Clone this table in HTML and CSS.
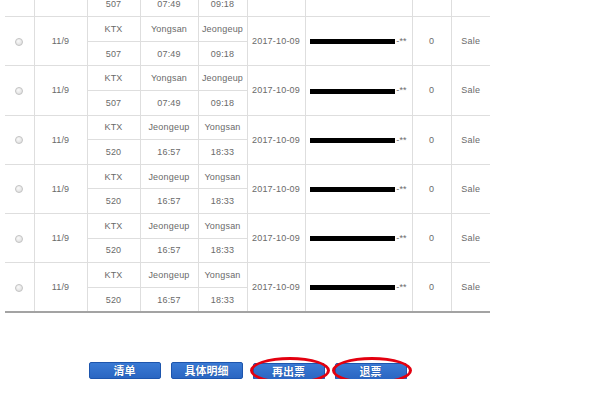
FILE: index.html
```html
<!DOCTYPE html>
<html lang="zh">
<head>
    <meta charset="UTF-8">
    <meta name="viewport" content="width=device-width, initial-scale=1.0">
    <title>Ticket list</title>
    <link rel="stylesheet" href="styles.css">
</head>
<body>
    <div class="page">
        <div class="list">
            <table class="tickets">
                <colgroup>
                    <col class="c-sel"><col class="c-day"><col class="c-train"><col class="c-from"><col class="c-to">
                    <col class="c-date"><col class="c-no"><col class="c-cnt"><col class="c-state">
                </colgroup>
                <tbody>
                    <tr>
                        <td rowspan="2"><input type="radio" name="pick"></td>
                        <td rowspan="2">11/9</td>
                        <td>KTX</td><td>Yongsan</td><td>Jeongeup</td>
                        <td rowspan="2">2017-10-09</td>
                        <td rowspan="2"><span class="hide"></span>-**</td>
                        <td rowspan="2">0</td>
                        <td rowspan="2">Sale</td>
                    </tr>
                    <tr><td>507</td><td>07:49</td><td>09:18</td></tr>

                    <tr>
                        <td rowspan="2"><input type="radio" name="pick"></td>
                        <td rowspan="2">11/9</td>
                        <td>KTX</td><td>Yongsan</td><td>Jeongeup</td>
                        <td rowspan="2">2017-10-09</td>
                        <td rowspan="2"><span class="hide"></span>-**</td>
                        <td rowspan="2">0</td>
                        <td rowspan="2">Sale</td>
                    </tr>
                    <tr><td>507</td><td>07:49</td><td>09:18</td></tr>

                    <tr>
                        <td rowspan="2"><input type="radio" name="pick"></td>
                        <td rowspan="2">11/9</td>
                        <td>KTX</td><td>Yongsan</td><td>Jeongeup</td>
                        <td rowspan="2">2017-10-09</td>
                        <td rowspan="2"><span class="hide"></span>-**</td>
                        <td rowspan="2">0</td>
                        <td rowspan="2">Sale</td>
                    </tr>
                    <tr><td>507</td><td>07:49</td><td>09:18</td></tr>

                    <tr>
                        <td rowspan="2"><input type="radio" name="pick"></td>
                        <td rowspan="2">11/9</td>
                        <td>KTX</td><td>Jeongeup</td><td>Yongsan</td>
                        <td rowspan="2">2017-10-09</td>
                        <td rowspan="2"><span class="hide"></span>-**</td>
                        <td rowspan="2">0</td>
                        <td rowspan="2">Sale</td>
                    </tr>
                    <tr><td>520</td><td>16:57</td><td>18:33</td></tr>

                    <tr>
                        <td rowspan="2"><input type="radio" name="pick"></td>
                        <td rowspan="2">11/9</td>
                        <td>KTX</td><td>Jeongeup</td><td>Yongsan</td>
                        <td rowspan="2">2017-10-09</td>
                        <td rowspan="2"><span class="hide"></span>-**</td>
                        <td rowspan="2">0</td>
                        <td rowspan="2">Sale</td>
                    </tr>
                    <tr><td>520</td><td>16:57</td><td>18:33</td></tr>

                    <tr>
                        <td rowspan="2"><input type="radio" name="pick"></td>
                        <td rowspan="2">11/9</td>
                        <td>KTX</td><td>Jeongeup</td><td>Yongsan</td>
                        <td rowspan="2">2017-10-09</td>
                        <td rowspan="2"><span class="hide"></span>-**</td>
                        <td rowspan="2">0</td>
                        <td rowspan="2">Sale</td>
                    </tr>
                    <tr><td>520</td><td>16:57</td><td>18:33</td></tr>

                    <tr>
                        <td rowspan="2"><input type="radio" name="pick"></td>
                        <td rowspan="2">11/9</td>
                        <td>KTX</td><td>Jeongeup</td><td>Yongsan</td>
                        <td rowspan="2">2017-10-09</td>
                        <td rowspan="2"><span class="hide"></span>-**</td>
                        <td rowspan="2">0</td>
                        <td rowspan="2">Sale</td>
                    </tr>
                    <tr><td>520</td><td>16:57</td><td>18:33</td></tr>
                </tbody>
            </table>
        </div>

        <div class="actions">
            <button type="button" class="btn">清单</button>
            <button type="button" class="btn">具体明细</button>
            <span class="mark"><button type="button" class="btn">再出票</button></span>
            <span class="mark"><button type="button" class="btn">退票</button></span>
        </div>
    </div>
</body>
</html>
```

FILE: styles.css
```css
body {
    margin: 0;
    padding: 0;
    background: #fff;
    font-family: "Liberation Sans", Arial, sans-serif;
    color: #6a6a6a;
}

.page {
    width: 485px;
    padding-left: 5px;
}

.list {
    overflow: hidden;
}

.tickets {
    width: 485px;
    margin-top: -33px;
    table-layout: fixed;
    border-collapse: collapse;
    border-left: hidden;
    border-right: hidden;
    border-bottom: 2px solid #a3a3a3;
    font-size: 9px;
    letter-spacing: 0.2px;
}

.c-sel { width: 29px; }
.c-day { width: 53px; }
.c-train { width: 53px; }
.c-from { width: 58px; }
.c-to { width: 49px; }
.c-date { width: 58px; }
.c-no { width: 107px; }
.c-cnt { width: 39px; }
.c-state { width: 39px; }

.tickets td {
    height: 23.6px;
    padding: 0;
    border: 1px solid #dedede;
    text-align: center;
    white-space: nowrap;
}

.tickets input[type="radio"] {
    appearance: none;
    width: 8px;
    height: 8px;
    margin: 0;
    border: 1px solid #c4c4c4;
    border-radius: 50%;
    background: radial-gradient(circle at 40% 35%, #fafafa, #d9d9d9);
    vertical-align: middle;
}

.hide {
    display: inline-block;
    width: 85px;
    height: 5px;
    background: #000;
    vertical-align: middle;
    margin-right: 1px;
}

.actions {
    display: flex;
    justify-content: center;
    gap: 10px;
    margin-top: 49px;
}

.btn {
    width: 72px;
    height: 17px;
    padding: 0;
    border: 1px solid #1d55ad;
    border-radius: 2px;
    background: linear-gradient(#3a7ad4, #2a66c2);
    color: #fff;
    font-family: "Noto Sans CJK SC", sans-serif;
    font-size: 11px;
    font-weight: bold;
    line-height: 15px;
    text-shadow: 0 0 1px #0d3c8a;
}

.mark {
    position: relative;
    display: inline-block;
    height: 17px;
}

.mark::after {
    content: "";
    position: absolute;
    left: -3px;
    right: -5px;
    top: -5px;
    bottom: -5px;
    border: 3px solid #e3000f;
    border-radius: 50%;
}
```
